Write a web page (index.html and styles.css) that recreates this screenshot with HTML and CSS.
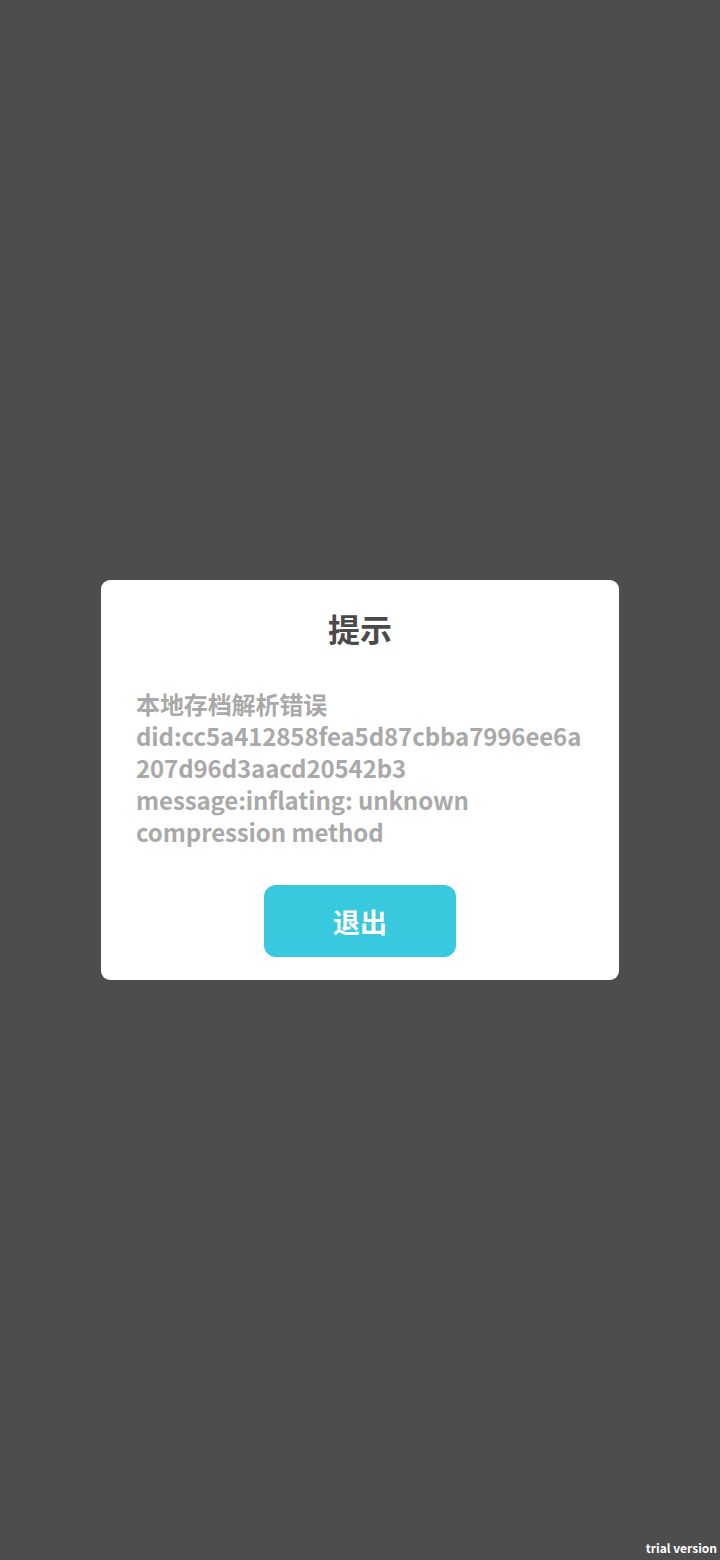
FILE: index.html
```html
<!DOCTYPE html>
<html lang="zh-CN">
<head>
<meta charset="utf-8">
<title>提示</title>
<link rel="stylesheet" href="styles.css">
</head>
<body>
<div class="screen">
  <div class="dialog">
    <div class="title">提示</div>
    <div class="message">本地存档解析错误
did:cc5a412858fea5d87cbba7996ee6a207d96d3aacd20542b3
message:inflating: unknown compression method</div>
    <div class="actions">
      <button class="btn">退出</button>
    </div>
  </div>
  <div class="watermark">trial version</div>
</div>
</body>
</html>
```

FILE: styles.css
```css
html, body {
  margin: 0;
  padding: 0;
  width: 720px;
  height: 1560px;
  background: #4d4d4d;
}
.screen {
  position: relative;
  width: 720px;
  height: 1560px;
  display: flex;
  align-items: center;
  justify-content: center;
  font-family: "Noto Sans CJK SC", "Noto Sans", sans-serif;
}
.dialog {
  width: 518px;
  box-sizing: border-box;
  background: #ffffff;
  border-radius: 9px;
  padding: 26px 30px 23px 35px;
  display: flex;
  flex-direction: column;
}
.title {
  text-align: center;
  margin-left: -5px;
  font-size: 32px;
  line-height: 44px;
  font-weight: 700;
  color: #4a4a4a;
}
.message {
  margin-top: 38px;
  font-size: 24px;
  line-height: 32px;
  font-weight: 700;
  letter-spacing: -0.1px;
  color: #a9a9a9;
  white-space: pre-line;
  overflow-wrap: anywhere;
}
.actions {
  margin-top: 37px;
  margin-left: -5px;
  display: flex;
  justify-content: center;
}
.btn {
  width: 192px;
  height: 72px;
  border: none;
  border-radius: 12px;
  background: #38c9de;
  color: #ffffff;
  font-family: "Noto Sans CJK SC", "Noto Sans", sans-serif;
  font-size: 27px;
  font-weight: 700;
  padding: 0;
}
.watermark {
  position: absolute;
  right: 3px;
  bottom: 4px;
  font-family: "Noto Sans CJK SC", "Noto Sans", sans-serif;
  font-size: 12px;
  font-weight: 700;
  color: #ffffff;
  line-height: 16px;
}
```
